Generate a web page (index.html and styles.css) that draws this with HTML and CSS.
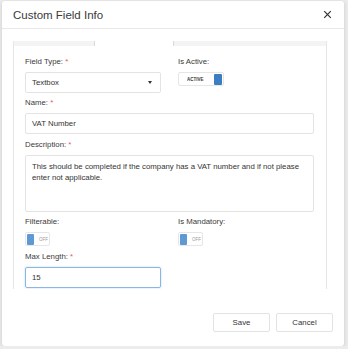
FILE: index.html
```html
<!DOCTYPE html>
<html lang="en">
    <head>
        <meta charset="UTF-8">
        <meta name="viewport" content="width=device-width, initial-scale=1.0">
        <title>Custom Field Info</title>
        <link rel="stylesheet" href="styles.css">
    </head>
    <body>
        <div class="modal">
            <div class="modal-header">
                <span class="modal-title">Custom Field Info</span>
                <svg class="close" width="9" height="9" viewBox="0 0 9 9">
                    <path d="M1.2 1.2 L7.8 7.8 M7.8 1.2 L1.2 7.8" stroke="#333" stroke-width="1.2" fill="none"/>
                </svg>
            </div>
            <div class="modal-body">
                <div class="tabs">
                    <div class="tab tab-left"></div>
                    <div class="tab tab-active"></div>
                    <div class="tab tab-right"></div>
                </div>
                <div class="panel">
                    <div class="row">
                        <div class="group">
                            <div class="label">Field Type: <span class="req">*</span></div>
                            <div class="select">
                                <span>Textbox</span>
                                <span class="caret"></span>
                            </div>
                        </div>
                        <div class="group">
                            <div class="label">Is Active:</div>
                            <div class="toggle toggle-on">
                                <span class="toggle-text">ACTIVE</span>
                                <span class="knob"></span>
                            </div>
                        </div>
                    </div>
                    <div class="group group-wide">
                        <div class="label">Name: <span class="req">*</span></div>
                        <div class="input">VAT Number</div>
                    </div>
                    <div class="group">
                        <div class="label">Description: <span class="req">*</span></div>
                        <div class="textarea">This should be completed if the company has a VAT number and if not please enter not applicable.</div>
                    </div>
                    <div class="row">
                        <div class="group group-wide">
                            <div class="label">Filterable:</div>
                            <div class="toggle toggle-off">
                                <span class="knob"></span>
                                <span class="toggle-text">OFF</span>
                            </div>
                        </div>
                        <div class="group group-wide">
                            <div class="label">Is Mandatory:</div>
                            <div class="toggle toggle-off">
                                <span class="knob"></span>
                                <span class="toggle-text">OFF</span>
                            </div>
                        </div>
                    </div>
                    <div class="row">
                        <div class="group">
                            <div class="label">Max Length: <span class="req">*</span></div>
                            <div class="input input-focus">15</div>
                        </div>
                    </div>
                </div>
            </div>
            <div class="modal-footer">
                <button class="btn">Save</button>
                <button class="btn">Cancel</button>
            </div>
        </div>
    </body>
</html>
```

FILE: styles.css
```css
body {
    margin: 0;
    padding: 1px 0 0 2px;
    background-color: #ececec;
    font-family: "Liberation Sans", Arial, sans-serif;
    color: #333;
}
.modal {
    width: 342px;
    height: 345px;
    background: white;
    border-radius: 3px;
    box-shadow: 0px 1px 4px rgba(0, 0, 0, 0.15);
    display: flex;
    flex-direction: column;
    overflow: hidden;
}
.modal-header {
    height: 27px;
    border-bottom: 1px solid #e8e8e8;
    display: flex;
    align-items: center;
    justify-content: space-between;
    padding: 0 12px 0 11px;
}
.modal-title {
    font-size: 11.5px;
    color: #3a3a3a;
}
.close {
    display: block;
}
.modal-body {
    height: 248px;
    padding: 12px 17px 0 11px;
    overflow: hidden;
}
.tabs {
    display: flex;
    height: 5px;
}
.tab-left {
    width: 80px;
    background: #f4f4f4;
    border-left: 1px solid #e6e6e6;
    border-right: 1px solid #dadada;
}
.tab-active {
    width: 78px;
}
.tab-right {
    flex: 1;
    background: #f4f4f4;
    border-left: 1px solid #dadada;
    border-right: 1px solid #e6e6e6;
}
.panel {
    border-left: 1px solid #e6e6e6;
    border-right: 1px solid #e6e6e6;
    padding: 11px 12px 0 11px;
    height: 300px;
}
.row {
    display: grid;
    grid-template-columns: 1fr 1fr;
    column-gap: 17px;
}
.group {
    margin-bottom: 5px;
}
.group-wide {
    margin-bottom: 6px;
}
.label {
    font-size: 7.8px;
    line-height: 10px;
    margin-bottom: 5px;
    color: #3a3a3a;
}
.req {
    color: #e0605c;
}
.select, .input, .textarea {
    box-sizing: border-box;
    border: 1px solid #e3e3e3;
    border-radius: 2px;
    font-size: 7.8px;
    color: #333;
    padding: 0 6px;
}
.select {
    height: 21px;
    display: flex;
    align-items: center;
    justify-content: space-between;
    padding-right: 8px;
}
.caret {
    width: 0;
    height: 0;
    border-left: 2.5px solid transparent;
    border-right: 2.5px solid transparent;
    border-top: 3px solid #333;
}
.input {
    height: 21px;
    line-height: 19px;
}
.input-focus {
    border-color: #8ab6e0;
    box-shadow: 0 0 2px rgba(102, 175, 233, 0.5);
}
.textarea {
    height: 57px;
    line-height: 11px;
    padding-top: 5px;
}
.toggle {
    box-sizing: border-box;
    height: 14px;
    border: 1px solid #e6e6e6;
    border-radius: 2px;
    display: flex;
    align-items: center;
    padding: 0 1px;
}
.toggle-on {
    width: 46px;
    justify-content: space-between;
    padding-left: 8px;
}
.toggle-off {
    width: 25px;
}
.knob {
    width: 8px;
    height: 11px;
    border-radius: 1px;
    background: #3b7ec2;
}
.toggle-off .knob {
    background: #5e99d4;
}
.toggle-text {
    font-size: 4.5px;
    font-weight: bold;
    color: #333;
}
.toggle-off .toggle-text {
    font-weight: normal;
    color: #999;
    margin-left: 5px;
}
.modal-footer {
    flex: 1;
    display: flex;
    justify-content: flex-end;
    align-items: flex-start;
    gap: 6px;
    padding: 24px 11px 0 0;
}
.btn {
    width: 57px;
    height: 19px;
    background: white;
    border: 1px solid #e3e3e3;
    border-radius: 2px;
    font-family: "Liberation Sans", Arial, sans-serif;
    font-size: 7.8px;
    color: #333;
    padding: 0;
}
```
